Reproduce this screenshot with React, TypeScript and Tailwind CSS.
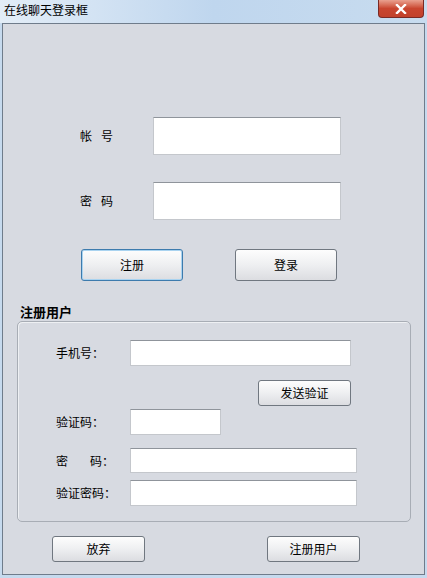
import React, { useState } from "react";

const font = { fontFamily: '"Noto Sans CJK SC", "Noto Sans", sans-serif' };

const Btn = ({ label, className, focused }: { label: string; className: string; focused?: boolean }) => (
  <button
    type="button"
    className={
      "rounded-[3px] border bg-gradient-to-b from-[#fdfdfd] via-[#eeeff1] to-[#dcdde1] text-[12px] text-black " +
      (focused ? "border-[#3d7bad] shadow-[inset_0_0_0_1px_#a9d3f0] " : "border-[#707780] ") +
      className
    }
  >
    {label}
  </button>
);

const Field = ({ className, type = "text", onChange }: { className: string; type?: string; onChange?: (v: string) => void }) => (
  <input
    type={type}
    className={"bg-white border border-[#c4c7cc] border-t-[#8f949b] outline-none px-1 text-[12px] " + className}
    onChange={(e) => onChange && onChange(e.target.value)}
  />
);

const App = () => {
  const [account, setAccount] = useState("");
  const [password, setPassword] = useState("");

  return (
    <div className="w-[427px] h-[578px] bg-[#c6daee] flex flex-col overflow-hidden" style={font}>
      {/* title bar */}
      <div className="h-[23px] flex justify-between bg-gradient-to-r from-[#e3edf7] via-[#bfd6ee] to-[#c8dcef]">
        <div className="pl-[4px] pt-[2px] text-[12px] leading-[16px] text-black">在线聊天登录框</div>
        <div className="mr-[3px] w-[46px] h-[18px] rounded-b-[4px] border border-t-0 border-[#7a2a25] bg-gradient-to-b from-[#e9a08f] via-[#c9452f] to-[#c2412c] flex items-center justify-center">
          <svg width="12" height="10" viewBox="0 0 12 10">
            <path d="M2 1 L10 9 M10 1 L2 9" stroke="#fff" strokeWidth="2.4" strokeLinecap="square" />
          </svg>
        </div>
      </div>

      {/* client area */}
      <div className="mx-[2px] mb-[3px] flex-1 border border-[#6f7c8b] bg-[#d7dae1] flex flex-col text-[12px] text-black">
        <div className="mt-[93px] flex items-center">
          <div className="ml-[77px] w-[73px] flex gap-[9px]">
            <span>帐</span>
            <span>号</span>
          </div>
          <Field className="w-[188px] h-[38px]" onChange={setAccount} />
        </div>
        <div className="mt-[27px] flex items-center">
          <div className="ml-[77px] w-[73px] flex gap-[9px]">
            <span>密</span>
            <span>码</span>
          </div>
          <Field className="w-[188px] h-[38px]" type="password" onChange={setPassword} />
        </div>

        <div className="mt-[29px] ml-[78px] flex gap-[52px]">
          <Btn label="注册" className="w-[102px] h-[32px]" focused />
          <Btn label="登录" className="w-[102px] h-[32px]" />
        </div>

        <div className="mt-[23px] ml-[17px] text-[13px] font-bold leading-[16px]">注册用户</div>

        <div className="mt-[1px] ml-[14px] w-[394px] rounded-[5px] border border-[#a8adb5] shadow-[inset_1px_1px_0_#eef0f3] flex flex-col pb-[15px]">
          <div className="mt-[18px] flex items-center">
            <div className="ml-[38px] w-[74px]">手机号：</div>
            <Field className="w-[221px] h-[26px]" />
          </div>
          <Btn label="发送验证" className="mt-[14px] ml-[240px] w-[93px] h-[26px]" />
          <div className="mt-[3px] flex items-center">
            <div className="ml-[38px] w-[74px]">验证码：</div>
            <Field className="w-[91px] h-[26px]" />
          </div>
          <div className="mt-[13px] flex items-center">
            <div className="ml-[38px] w-[74px] flex gap-[22px]">
              <span>密</span>
              <span>码：</span>
            </div>
            <Field className="w-[227px] h-[25px]" type="password" />
          </div>
          <div className="mt-[7px] flex items-center">
            <div className="ml-[38px] w-[74px]">验证密码：</div>
            <Field className="w-[227px] h-[26px]" type="password" />
          </div>
        </div>

        <div className="mt-[14px] ml-[49px] flex gap-[122px]">
          <Btn label="放弃" className="w-[93px] h-[26px]" />
          <Btn label="注册用户" className="w-[93px] h-[26px]" />
        </div>
        <span className="hidden">{account + password}</span>
      </div>
    </div>
  );
};

export default App;
